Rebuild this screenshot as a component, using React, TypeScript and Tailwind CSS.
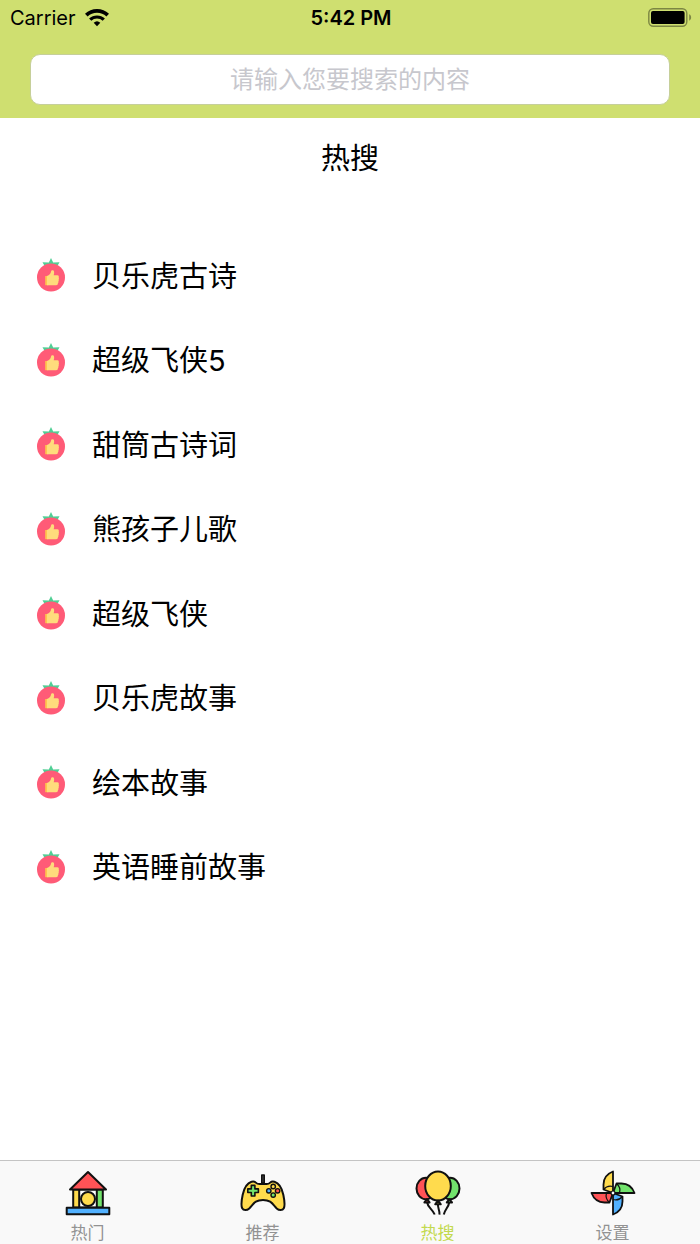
import { useState, type ReactNode } from 'react';
import clsx from 'clsx';

const hotSearches = [
  '贝乐虎古诗',
  '超级飞侠5',
  '甜筒古诗词',
  '熊孩子儿歌',
  '超级飞侠',
  '贝乐虎故事',
  '绘本故事',
  '英语睡前故事',
];

const tabs = [
  { label: '热门', icon: <BlocksIcon /> },
  { label: '推荐', icon: <GamepadIcon /> },
  { label: '热搜', icon: <BalloonsIcon /> },
  { label: '设置', icon: <PinwheelIcon /> },
];

export default function App() {
  const [activeTab, setActiveTab] = useState('热搜');

  return (
    <div className="flex min-h-screen flex-col bg-white font-['Inter','Noto_Sans_CJK_SC',sans-serif] text-black">
      <header className="bg-[#cfdf70] pb-[13px]">
        <StatusBar />
        <form role="search" className="px-[30px] pt-[18px]" onSubmit={(e) => e.preventDefault()}>
          <input
            type="text"
            aria-label="搜索"
            placeholder="请输入您要搜索的内容"
            className="block h-[51px] w-full rounded-[10px] border border-[#c6cf9a] bg-white px-4 text-center text-2xl outline-none placeholder:text-[#c7c7cd]"
          />
        </form>
      </header>

      <main className="flex-1">
        <h1 className="pt-[22px] text-center text-[29px] leading-[38px]">热搜</h1>
        <ul className="mt-14 grid min-h-[676px] auto-rows-fr">
          {hotSearches.map((name) => (
            <li key={name}>
              <button type="button" className="flex h-full w-full items-center gap-[26px] px-9 text-left">
                <TomatoIcon />
                <span className="pt-px text-[29px] leading-10">{name}</span>
              </button>
            </li>
          ))}
        </ul>
      </main>

      <nav className="grid grid-cols-4 border-t border-[#c4c4c4] bg-[#f9f9f9]">
        {tabs.map((tab) => (
          <TabButton
            key={tab.label}
            label={tab.label}
            active={tab.label === activeTab}
            onClick={() => setActiveTab(tab.label)}
          >
            {tab.icon}
          </TabButton>
        ))}
      </nav>
    </div>
  );
}

function StatusBar() {
  return (
    <div className="grid h-9 grid-cols-3 items-center pr-2 pl-[10px] text-xl">
      <div className="flex items-center gap-[9px]">
        <span>Carrier</span>
        <svg viewBox="0 0 24 18" className="h-[18px] w-6" fill="none" stroke="#000" aria-hidden="true">
          <path d="M1.3 6.2a15.6 15.6 0 0 1 21.4 0" strokeWidth="3.8" />
          <path d="M5.2 10.7a9.9 9.9 0 0 1 13.6 0" strokeWidth="3.2" />
          <path d="M12 17.2l-3.3-3.4a4.8 4.8 0 0 1 6.6 0z" fill="#000" stroke="none" />
        </svg>
      </div>
      <span className="text-center font-semibold">5:42 PM</span>
      <svg viewBox="0 0 44 20" className="h-5 w-11 justify-self-end" aria-hidden="true">
        <rect x="0.8" y="0.8" width="38" height="17.4" rx="4.5" fill="none" stroke="#7c8643" strokeWidth="1.4" />
        <rect x="3" y="3" width="33.6" height="13" rx="2" fill="#000" />
        <path d="M41.2 6.3c2.6 1.2 2.6 5.2 0 6.4z" fill="#7c8643" />
      </svg>
    </div>
  );
}

interface TabButtonProps {
  label: string;
  active: boolean;
  onClick: () => void;
  children: ReactNode;
}

function TabButton({ label, active, onClick, children }: TabButtonProps) {
  return (
    <button
      type="button"
      aria-current={active ? 'page' : undefined}
      onClick={onClick}
      className="flex flex-col items-center pt-2"
    >
      {children}
      <span
        className={clsx('mt-[5px] text-[17px] leading-[22px]', active ? 'text-[#c3d94e]' : 'text-[#929292]')}
      >
        {label}
      </span>
    </button>
  );
}

function TomatoIcon() {
  return (
    <svg viewBox="0 0 30 36" className="h-9 w-[30px] shrink-0" aria-hidden="true">
      <path d="M15 0l2.2 4.600 6.300-.3-3.500 6.200H10L6.500 4.300l6.300.3z" fill="#4fcf94" />
      <circle cx="15" cy="19.500" r="14" fill="#ff5b77" />
      <path d="M9.200 18h3v9.200h-3z" fill="#ffc44d" />
      <path
        d="M11 18c2.300-.7 3.700-2.200 4.100-4.700.3-1.500 2.700-1.500 3 .4.2 1.200 0 2.500-.4 3.600h3.700c1.200 0 1.700 1 1.300 1.900.4.7.4 1.400 0 2.100.3.7.2 1.500-.3 2.100.2.7 0 1.400-.5 1.900.1 1.300-.6 1.900-1.800 1.900H11z"
        fill="#ffdc7c"
      />
    </svg>
  );
}

function BlocksIcon() {
  return (
    <svg viewBox="0 0 48 48" className="size-12" stroke="#111" strokeWidth="2" strokeLinejoin="round" aria-hidden="true">
      <path d="M15 20.5h18v18H15z" fill="#fff" />
      <path d="M9.200 20.500h6v18h-6z" fill="#ffdb4d" />
      <path d="M32.800 20.500h6v18h-6z" fill="#72e36c" />
      <circle cx="24" cy="30" r="7" fill="#ffdb4d" />
      <path d="M24 3l18 17.500H6z" fill="#ff5356" />
      <path d="M2.700 38.700h42.600v6.500H2.700z" fill="#51b1ff" />
    </svg>
  );
}

function GamepadIcon() {
  return (
    <svg viewBox="0 0 48 48" className="size-12" stroke="#111" strokeWidth="2" strokeLinejoin="round" aria-hidden="true">
      <path d="M22.800 6h2.400v8h-2.400z" fill="#555" strokeWidth="1.6" />
      <path
        d="M12.500 12.800c1.600-.6 3.200-.3 4.300.8 1.200 1.200 2.200 1.500 3.700 1.500h7c1.500 0 2.500-.3 3.700-1.500 1.100-1.100 2.700-1.400 4.300-.8 5.500 1.700 7.500 7 8.800 12.900 1 4.800 2.200 10.300.5 13.600-1.300 2.400-4.700 2.300-7.100.1-3.800-3.500-5.200-8.500-13.700-8.500s-9.900 5-13.700 8.500c-2.400 2.200-5.800 2.300-7.100-.1-1.700-3.300-.5-8.800.5-13.600 1.300-5.900 3.300-11.200 8.800-12.900z"
        fill="#ffdb4d"
      />
      <path d="M12.300 16.400h3.600v3.500h3.500v3.600h-3.500V27h-3.600v-3.500H8.800v-3.600h3.500z" fill="#72e36c" strokeWidth="1.6" />
      <g strokeWidth="1.4">
        <circle cx="34.200" cy="17.500" r="2.200" fill="#ffdb4d" />
        <circle cx="29.800" cy="21.800" r="2.200" fill="#51b1ff" />
        <circle cx="38.600" cy="21.800" r="2.200" fill="#ff5356" />
        <circle cx="34.200" cy="26.100" r="2.200" fill="#72e36c" />
      </g>
    </svg>
  );
}

function BalloonsIcon() {
  return (
    <svg viewBox="0 0 48 48" className="size-12" stroke="#111" strokeWidth="2" strokeLinejoin="round" aria-hidden="true">
      <path
        d="M13 33c.7 5.500 5.500 7 7.700 12.500M24 35c-.6 4 2 6.500 1.500 10.700M35.300 33c-.7 5.500-4.300 7-5.500 12.500"
        fill="none"
      />
      <ellipse cx="12" cy="19.500" rx="9.500" ry="10.700" fill="#ff5356" />
      <ellipse cx="36" cy="19.500" rx="9.500" ry="10.700" fill="#72e36c" />
      <path d="M13 30.200l2.600 3.200h-5.200z" fill="#ff5356" />
      <path d="M35.400 30.200l2.600 3.200h-5.200z" fill="#72e36c" />
      <ellipse cx="24" cy="17" rx="12.800" ry="14.500" fill="#ffdb4d" />
      <path d="M24 31.500l2.800 3.800h-5.600z" fill="#ffdb4d" />
    </svg>
  );
}

const blades = [
  { color: '#ffdb4d', angle: 0 },
  { color: '#72e36c', angle: 90 },
  { color: '#51b1ff', angle: 180 },
  { color: '#ff5356', angle: 270 },
];

function PinwheelIcon() {
  return (
    <svg viewBox="0 0 48 48" className="size-12" stroke="#111" strokeWidth="1.8" strokeLinejoin="round" aria-hidden="true">
      {blades.map((blade) => (
        <g key={blade.angle} transform={`rotate(${blade.angle} 24 24)`}>
          <path d="M24 24V2.500C17.500 5 14.500 10 14.500 15.500V20.500z" fill={blade.color} />
          <path d="M14.500 20.500C17 17.500 20.500 16.500 24 17.500" fill="none" strokeWidth="1.2" />
        </g>
      ))}
      <circle cx="24" cy="24" r="2" fill="#fff" strokeWidth="1.2" />
    </svg>
  );
}
